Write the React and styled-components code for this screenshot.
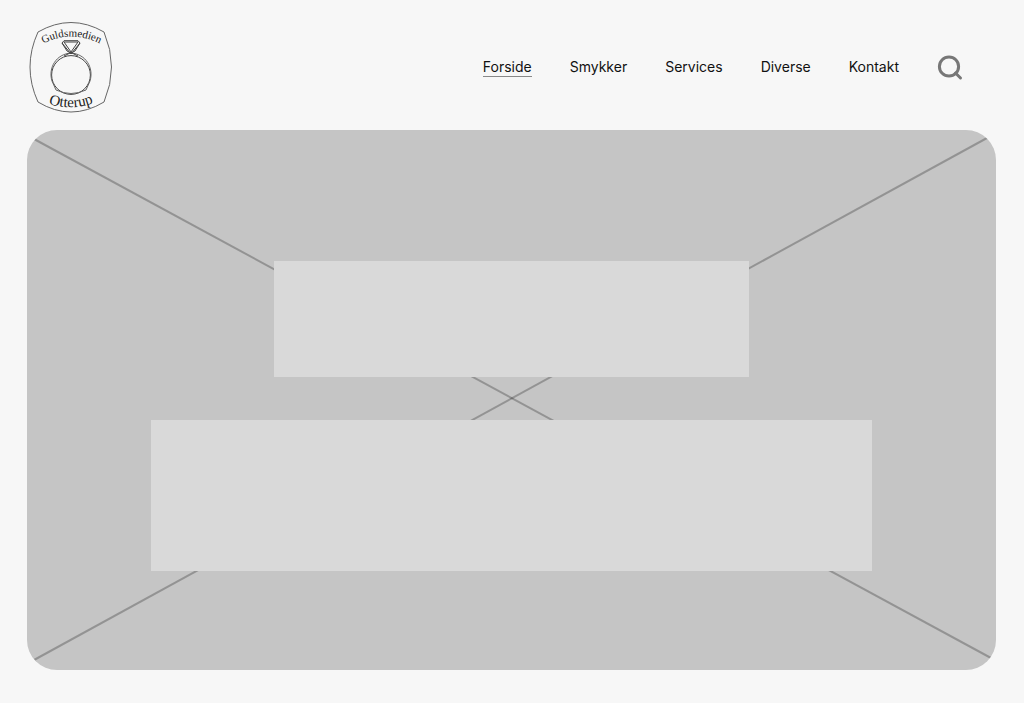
import React, { useState } from "react";
import styled, { createGlobalStyle } from "styled-components";

const links = ["Forside", "Smykker", "Services", "Diverse", "Kontakt"];

function Logo() {
    return (
        <LogoSvg viewBox="28 20 86 95" role="img" aria-label="Guldsmedien Otterup">
            <defs>
                <path id="logoTop" d="M39 46 Q71 27 104 46" />
                <path id="logoBottom" d="M44 102 Q71 113 98 101" />
            </defs>
            <g fill="none" stroke="#666" strokeWidth="1">
                <path d="M38 32 Q71 13 104 32 Q119 67 104 102 Q71 122 38 102 Q22 67 38 32 Z" />
                <circle cx="71" cy="75" r="19.4" stroke="#444" />
                <path d="M52 81 C48 68 56 54 71 53 C86 54 94 68 90 81 L86 90 Q71 97 56 90 Z" />
                <g stroke="#444" strokeLinejoin="round">
                    <path d="M64 40.7 H78 L80 43 L71 54 L62 43 Z" />
                    <path d="M64 42 L71 52 L78 42 Z" />
                    <path d="M62 43 L67 51 L71 53 L75 51 L80 43" />
                    <path d="M64 56 L71 52.5 L78 56" />
                </g>
            </g>
            <LogoText $size={11}>
                <textPath href="#logoTop" startOffset="50%">
                    Guldsmedien
                </textPath>
            </LogoText>
            <LogoText $size={15}>
                <textPath href="#logoBottom" startOffset="50%">
                    Otterup
                </textPath>
            </LogoText>
        </LogoSvg>
    );
}

function App() {
    const [active, setActive] = useState("Forside");
    return (
        <>
            <GlobalStyle />
            <Header>
                <LogoLink href="#">
                    <Logo />
                </LogoLink>
                <Nav>
                    {links.map((link) => (
                        <NavLink
                            key={link}
                            href={`#${link.toLowerCase()}`}
                            $active={link === active}
                            onClick={() => setActive(link)}
                        >
                            {link}
                        </NavLink>
                    ))}
                    <SearchButton type="button" aria-label="Søg">
                        <svg width="26" height="26" viewBox="0 0 26 26" fill="none" stroke="#777" strokeWidth="3">
                            <circle cx="12" cy="11.5" r="9.6" />
                            <path d="M18.5 18 L23.5 23" strokeLinecap="round" />
                        </svg>
                    </SearchButton>
                </Nav>
            </Header>
            <Hero>
                <Cross viewBox="0 0 969 540" preserveAspectRatio="none" aria-hidden="true">
                    <path d="M7 9 L964 528" />
                    <path d="M7 530 L960 8" />
                </Cross>
                <HeroContent>
                    <TitleBlock />
                    <TextBlock />
                </HeroContent>
            </Hero>
        </>
    );
}

export default App;

const GlobalStyle = createGlobalStyle`
    * {
        box-sizing: border-box;
    }
    body {
        margin: 0;
        background-color: #f7f7f7;
        color: #111;
        font-family: Inter, "Liberation Sans", sans-serif;
    }
`;

const Header = styled.header`
    display: flex;
    align-items: center;
    justify-content: space-between;
    padding: 20px 61px 15px 28px;
`;

const LogoLink = styled.a`
    display: flex;
`;

const LogoSvg = styled.svg`
    width: 86px;
    height: 95px;
`;

const LogoText = styled.text`
    font-family: "Liberation Serif", serif;
    font-size: ${({ $size }) => $size}px;
    text-anchor: middle;
    fill: #222;
`;

const Nav = styled.nav`
    display: flex;
    align-items: center;
    gap: 38px;
`;

const NavLink = styled.a`
    color: inherit;
    font-size: 14px;
    line-height: 18px;
    text-decoration: none;
    border-bottom: 1px solid ${({ $active }) => ($active ? "#888" : "transparent")};
`;

const SearchButton = styled.button`
    display: flex;
    padding: 0;
    border: none;
    background: none;
    cursor: pointer;
`;

const Hero = styled.main`
    display: grid;
    margin: 0 28px 33px 27px;
    border-radius: 30px;
    background-color: #c5c5c5;
    overflow: hidden;
`;

const Cross = styled.svg`
    grid-area: 1 / 1;
    width: 100%;
    height: 100%;
    min-height: 0;
    stroke: rgba(0, 0, 0, 0.25);
    stroke-width: 2;
`;

const HeroContent = styled.div`
    grid-area: 1 / 1;
    display: flex;
    flex-direction: column;
    align-items: center;
    gap: 43px;
    padding: 131px 0 99px;
    z-index: 1;
`;

const TitleBlock = styled.div`
    width: 49%;
    height: 116px;
    background-color: #d9d9d9;
`;

const TextBlock = styled.div`
    width: 74.5%;
    height: 151px;
    background-color: #d9d9d9;
`;
